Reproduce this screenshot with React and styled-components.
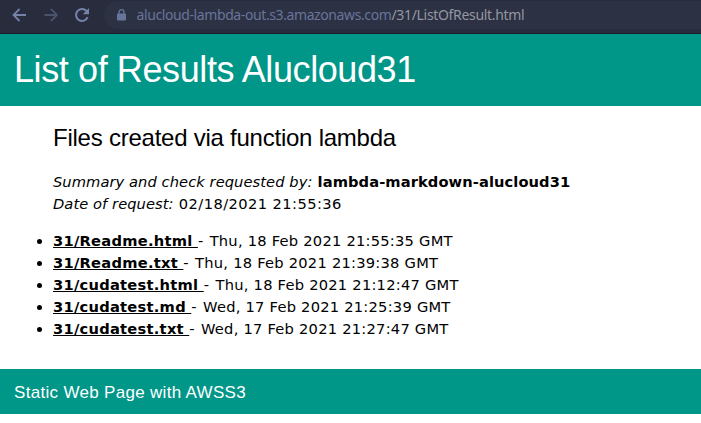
import React from "react";
import styled, { createGlobalStyle } from "styled-components";

const GlobalStyle = createGlobalStyle`
  * { box-sizing: border-box; }
  body {
    margin: 0;
    background: #fff;
    color: #000;
    font: 14.67px/22px "DejaVu Sans", Verdana, sans-serif;
  }
`;

const Toolbar = styled.div`
  display: flex;
  align-items: center;
  height: 34px;
  padding: 0 0 4px 11px;
  background: #282c3c;
  border-bottom: 1px solid #191c29;
`;

const NavButton = styled.span`
  display: flex;
  width: 31.5px;
  color: ${(p) => (p.$disabled ? "#4b526d" : "#7582aa")};
`;

const AddressBar = styled.div`
  display: flex;
  align-items: center;
  flex: 1;
  height: 28px;
  margin-left: -2px;
  padding-left: 13px;
  border-radius: 14px 0 0 14px;
  background: #2c3143;
  font: 14px/28px "Noto Sans", sans-serif;
  color: #68759b;
  white-space: nowrap;
`;

const Host = styled.span`
  margin-left: 11px;
  letter-spacing: -0.4px;
`;

const Path = styled.span`
  color: #9497a2;
  letter-spacing: -0.32px;
`;

const Header = styled.header`
  height: 72px;
  padding: 9px 14px;
  background: #009688;
  color: #fff;
`;

const Title = styled.h1`
  margin: 0;
  font: 400 36px/54px "Liberation Sans", Arial, sans-serif;
  letter-spacing: -0.4px;
  white-space: nowrap;
`;

const Content = styled.main`
  height: 263px;
  padding: 14px 0 0 53px;
`;

const Heading = styled.h2`
  margin: 0 0 15px;
  font: 400 24px/36px "Liberation Sans", Arial, sans-serif;
  letter-spacing: -0.24px;
  white-space: nowrap;
`;

const Summary = styled.p`
  margin: 0 0 15px;
  white-space: nowrap;
`;

const Label = styled.em`
  margin-right: 0.5px;
  letter-spacing: 0.07px;
`;

const Requester = styled.strong`
  letter-spacing: 0.09px;
`;

const Timestamp = styled.span`
  letter-spacing: ${(p) => (p.$wide ? "0.43px" : "0.24px")};
`;

const Dash = styled.span`
  letter-spacing: 0.9px;
`;

const FileList = styled.ul`
  margin: 0;
  padding: 0;
`;

const FileLink = styled.a`
  color: inherit;
  font-weight: 700;
  letter-spacing: 0.26px;
  text-decoration: underline;
  white-space: pre;
`;

const Footer = styled.footer`
  height: 45px;
  padding: 0 14px;
  background: #009688;
  color: #fff;
  font: 17px/47px "Liberation Sans", Arial, sans-serif;
  letter-spacing: 0.31px;
`;

const files = [
  ["31/Readme.html", "Thu, 18 Feb 2021 21:55:35 GMT"],
  ["31/Readme.txt", "Thu, 18 Feb 2021 21:39:38 GMT"],
  ["31/cudatest.html", "Thu, 18 Feb 2021 21:12:47 GMT"],
  ["31/cudatest.md", "Wed, 17 Feb 2021 21:25:39 GMT"],
  ["31/cudatest.txt", "Wed, 17 Feb 2021 21:27:47 GMT"],
];

const Arrow = ({ forward }) => (
  <svg width="16" height="16" viewBox="0 0 16 16" fill="none" stroke="currentColor" strokeWidth="1.8">
    <path d={forward ? "M1.5 8H14M8 2l6 6-6 6" : "M15 8H2.5M8.5 2l-6 6 6 6"} />
  </svg>
);

const Reload = () => (
  <svg width="16" height="16" viewBox="0 0 16 16" fill="none">
    <path d="M13.6 10.2A6 6 0 1 1 12.5 4" stroke="currentColor" strokeWidth="2" />
    <path d="M15 1v6.2H8.8z" fill="currentColor" />
  </svg>
);

const Lock = () => (
  <svg width="9" height="12" viewBox="0 0 9 12" fill="none">
    <path d="M2 5V3.2a2.5 2.5 0 0 1 5 0V5" stroke="currentColor" strokeWidth="1.3" />
    <rect y="4.5" width="9" height="7" rx="1" fill="currentColor" />
  </svg>
);

export default function App() {
  return (
    <>
      <GlobalStyle />
      <Toolbar>
        <NavButton><Arrow /></NavButton>
        <NavButton $disabled><Arrow forward /></NavButton>
        <NavButton><Reload /></NavButton>
        <AddressBar>
          <Lock />
          <Host>alucloud-lambda-out.s3.amazonaws.com</Host>
          <Path>/31/ListOfResult.html</Path>
        </AddressBar>
      </Toolbar>
      <Header><Title>List of Results Alucloud31</Title></Header>
      <Content>
        <Heading>Files created via function lambda</Heading>
        <Summary>
          <Label>Summary and check requested by:</Label> <Requester>lambda-markdown-alucloud31</Requester>
          <br />
          <Label>Date of request:</Label> <Timestamp $wide>02/18/2021 21:55:36</Timestamp>
        </Summary>
        <FileList>
          {files.map(([name, date]) => (
            <li key={name}>
              <FileLink>{name + " "}</FileLink>
              <Dash>- </Dash>
              <Timestamp>{date}</Timestamp>
            </li>
          ))}
        </FileList>
      </Content>
      <Footer>Static Web Page with AWSS3</Footer>
    </>
  );
}
